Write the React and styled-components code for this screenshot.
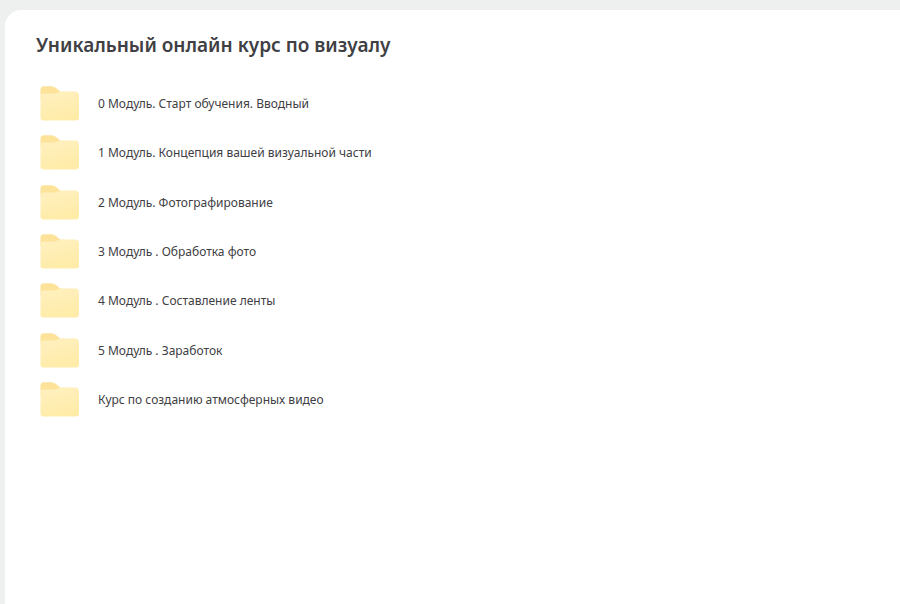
import styled, { createGlobalStyle } from "styled-components";

const folders = [
    "0 Модуль. Старт обучения. Вводный",
    "1 Модуль. Концепция вашей визуальной части",
    "2 Модуль. Фотографирование",
    "3 Модуль . Обработка фото",
    "4 Модуль . Составление ленты",
    "5 Модуль . Заработок",
    "Курс по созданию атмосферных видео",
];

function FolderIcon() {
    return (
        <svg width="40" height="36" viewBox="0 0 40 36" aria-hidden="true">
            <defs>
                <linearGradient id="folderFront" x1="0" y1="0" x2="0.3" y2="1">
                    <stop offset="0" stopColor="#fff0c0" />
                    <stop offset="1" stopColor="#ffeca9" />
                </linearGradient>
            </defs>
            <path d="M0.500 12V3.500Q0.500 0.300 4 0.300H11.500Q14 0.300 16 2L20.500 5.800H26V12Z" fill="#fde29a" />
            <path d="M0.500 10.500Q0.500 7.500 3.500 7.500H13Q15.500 7.500 17.500 6.500Q19.500 5.500 22 5.500H35Q39 5.500 39 9.500V31.500Q39 34.500 36 34.500H3.500Q0.500 34.500 0.500 31.500Z" fill="url(#folderFront)" />
        </svg>
    );
}

export default function App() {
    return (
        <>
            <GlobalStyle />
            <Panel>
                <Title>Уникальный онлайн курс по визуалу</Title>
                <FolderList>
                    {folders.map((name) => (
                        <li key={name}>
                            <FolderLink href="#">
                                <FolderIcon />
                                {name}
                            </FolderLink>
                        </li>
                    ))}
                </FolderList>
            </Panel>
        </>
    );
}

const GlobalStyle = createGlobalStyle`
    * {
        box-sizing: border-box;
    }

    body {
        margin: 0;
        background-color: #eeefef;
        font-family: "Noto Sans", "Open Sans", sans-serif;
        color: #404044;
    }

    #root {
        display: flex;
        flex-direction: column;
        min-height: 100vh;
        padding: 10px 0 0 5px;
    }
`

const Panel = styled.main`
    flex: 1;
    padding: 21px 31px;
    border-top-left-radius: 16px;
    background-color: white;
`

const Title = styled.h1`
    margin: 0 0 20px;
    font-size: 19px;
    line-height: 28px;
    font-weight: 600;
`

const FolderList = styled.ul`
    display: grid;
    grid-auto-rows: 1fr;
    min-height: 346px;
    margin: 0;
    padding: 0;
    list-style: none;
`

const FolderLink = styled.a`
    display: flex;
    align-items: center;
    gap: 18px;
    height: 100%;
    padding-left: 4px;
    font-size: 12px;
    line-height: 16px;
    color: inherit;
    text-decoration: none;
`
